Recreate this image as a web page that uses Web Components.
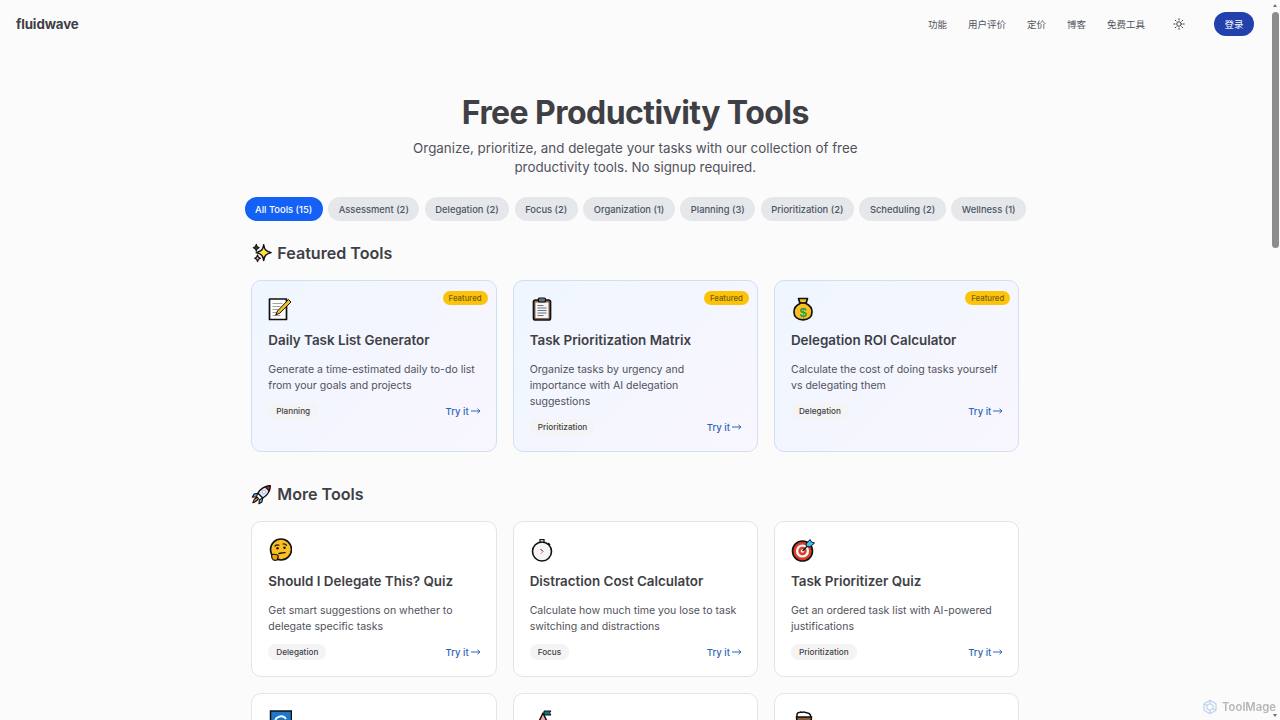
<!DOCTYPE html>
<html lang="en">
<head>
<meta charset="utf-8">
<title>Free Productivity Tools</title>
<style>
  html, body { margin: 0; height: 100%; overflow: hidden; background: #fbfbfb; }
  body { font-family: Inter, "Noto Sans CJK SC", sans-serif; color: #3f3f46; }
</style>
</head>
<body>
<site-header></site-header>
<page-main>
  <tools-hero heading="Free Productivity Tools">Organize, prioritize, and delegate your tasks with our collection of free productivity tools. No signup required.</tools-hero>
  <filter-bar>
    <filter-pill active>All Tools (15)</filter-pill>
    <filter-pill>Assessment (2)</filter-pill>
    <filter-pill>Delegation (2)</filter-pill>
    <filter-pill>Focus (2)</filter-pill>
    <filter-pill>Organization (1)</filter-pill>
    <filter-pill>Planning (3)</filter-pill>
    <filter-pill>Prioritization (2)</filter-pill>
    <filter-pill>Scheduling (2)</filter-pill>
    <filter-pill>Wellness (1)</filter-pill>
  </filter-bar>
  <tool-section icon="sparkles" heading="Featured Tools" class="featured">
    <tool-card featured icon="memo" heading="Daily Task List Generator" tag="Planning">Generate a time-estimated daily to-do list from your goals and projects</tool-card>
    <tool-card featured icon="clipboard" heading="Task Prioritization Matrix" tag="Prioritization">Organize tasks by urgency and importance with AI delegation suggestions</tool-card>
    <tool-card featured icon="bag" heading="Delegation ROI Calculator" tag="Delegation">Calculate the cost of doing tasks yourself vs delegating them</tool-card>
  </tool-section>
  <tool-section icon="rocket" heading="More Tools">
    <tool-card icon="thinking" heading="Should I Delegate This? Quiz" tag="Delegation">Get smart suggestions on whether to delegate specific tasks</tool-card>
    <tool-card icon="stopwatch" heading="Distraction Cost Calculator" tag="Focus">Calculate how much time you lose to task switching and distractions</tool-card>
    <tool-card icon="target" heading="Task Prioritizer Quiz" tag="Prioritization">Get an ordered task list with AI-powered justifications</tool-card>
    <tool-card icon="cycle"></tool-card>
    <tool-card icon="peak"></tool-card>
    <tool-card icon="coffee"></tool-card>
  </tool-section>
</page-main>
<fake-scrollbar></fake-scrollbar>
<tool-watermark></tool-watermark>

<script>
const ICONS = {
  sparkles: `<path d="M14.500 2c.8 5.500 2.400 7.500 8.500 9-6.100 1.500-7.700 3.500-8.500 9-.8-5.500-2.400-7.500-8.500-9 6.100-1.500 7.700-3.500 8.500-9z" fill="#fde047" stroke="#111" stroke-width="1.700" stroke-linejoin="round"/>
    <path d="M6 1.500c.4 2.600 1 3.400 3.400 3.900C7 5.900 6.400 6.700 6 9.300 5.600 6.700 5 5.900 2.600 5.400 5 4.900 5.600 4.100 6 1.500z" fill="#3f3f46" stroke="#111" stroke-width="1.300" stroke-linejoin="round"/>
    <path d="M7.500 13.500c.4 2.600 1 3.400 3.400 3.900-2.400.5-3 1.300-3.400 3.900-.4-2.600-1-3.400-3.400-3.900 2.400-.5 3-1.300 3.400-3.900z" fill="#e9a6c0" stroke="#111" stroke-width="1.300" stroke-linejoin="round"/>`,
  rocket: `<path d="M22 2c-6.500.3-11 3-14 8.500l5.500 5.500c5.500-3 8.200-7.500 8.500-14z" fill="#dbeafe" stroke="#111" stroke-width="1.600" stroke-linejoin="round"/>
    <path d="M22 2c-2.200.1-4.100.5-5.900 1.300l4.600 4.600c.8-1.800 1.200-3.700 1.300-5.900z" fill="#c81e1e" stroke="#111" stroke-width="1.200" stroke-linejoin="round"/>
    <circle cx="14.700" cy="9.300" r="2" fill="#fff" stroke="#9ca3af" stroke-width=".8"/>
    <path d="M8 10.500 3.500 11.500 1.500 15l4.500-.5zM13.500 16l-1 4.500-3.500 2 .5-4.500z" fill="#60a5fa" stroke="#111" stroke-width="1.200" stroke-linejoin="round"/>
    <path d="M7 15c-2.200.7-4 2.800-5 6.500 3.700-1 5.800-2.800 6.500-5z" fill="#f97316" stroke="#111" stroke-width="1.200" stroke-linejoin="round"/>`,
  memo: `<path d="M1.500 2h17v20.500h-17z" fill="#fff" stroke="#111" stroke-width="1.700" stroke-linejoin="round"/>
    <path d="M4.500 6.500h10M4.500 9.500h8M4.500 12.500h6M4.500 15.500h5M4.500 18.500h8" stroke="#a8a29e" stroke-width="1"/>
    <path d="M20.500 2.500 9.500 14l-1.800 4 4-1.800L23 5z" fill="#fbbf24" stroke="#111" stroke-width="1" stroke-linejoin="round"/>`,
  clipboard: `<rect x="3.500" y="3" width="17" height="20" rx="2" fill="#8b6b52" stroke="#111" stroke-width="1.700"/>
    <rect x="5.500" y="5.500" width="13" height="15.500" fill="#f3f4f6"/>
    <rect x="8.500" y="1" width="7" height="4" rx="1" fill="#6b7280" stroke="#111" stroke-width="1.200"/>
    <path d="M7.500 8.500h6M7.500 11h9M7.500 13.500h9M7.500 16h9M7.500 18.500h6" stroke="#6b7280" stroke-width="1"/>`,
  bag: `<path d="M7.500 1.500h9L15 6.500c4 1.800 6 5 6 8.500 0 4.800-3.500 7.800-9 7.800S3 19.800 3 15c0-3.500 2-6.700 6-8.500z" fill="#fbbf24" stroke="#111" stroke-width="1.700" stroke-linejoin="round"/>
    <path d="M8.500 6h7" stroke="#111" stroke-width="1.700"/>
    <text x="12" y="19.500" text-anchor="middle" font-family="Liberation Sans, sans-serif" font-size="13" font-weight="700" fill="#16a34a">$</text>`,
  thinking: `<circle cx="13" cy="11.500" r="10.500" fill="#fbbf24" stroke="#111" stroke-width="1.600"/>
    <path d="M7 8c1.200-1.200 2.800-1.400 4-.8M15 6c1.500-.2 2.800.3 3.500 1.300" fill="none" stroke="#111" stroke-width="1.200" stroke-linecap="round"/>
    <circle cx="9.500" cy="10.200" r="1.200" fill="#111"/><circle cx="16.500" cy="9.700" r="1.200" fill="#111"/>
    <path d="M11 15.500c2-.4 4-1 6-.8" fill="none" stroke="#111" stroke-width="1.300" stroke-linecap="round"/>
    <path d="M3.500 17c1.500-1 3.800-.8 5.300-.3 1 .4 1.800 1.500 1.200 2.800l-1 2.500c-1.800.7-4 0-5-1.800z" fill="#f59e0b" stroke="#111" stroke-width="1.200" stroke-linejoin="round"/>`,
  stopwatch: `<circle cx="12" cy="13.500" r="9.500" fill="#f5f5f5" stroke="#111" stroke-width="1.600"/>
    <path d="M10 1.500h4v2.500h-4z" fill="#d4d4d4" stroke="#111" stroke-width="1.200"/>
    <path d="m18 5 2 2" stroke="#111" stroke-width="1.600"/>
    <path d="m10.500 11 2.500 2.500-2.500 2.500" fill="none" stroke="#a1a1aa" stroke-width="1"/>
    <path d="m10.500 11 2.500 2.500" stroke="#c81e1e" stroke-width="1"/>`,
  target: `<circle cx="11.500" cy="13" r="10" fill="#dc3b26" stroke="#111" stroke-width="1.600"/>
    <circle cx="11.500" cy="13" r="6.600" fill="#f5f5f5"/><circle cx="11.500" cy="13" r="4.200" fill="#dc3b26"/><circle cx="11.500" cy="13" r="1.800" fill="#f5f5f5"/>
    <path d="m11.500 13 8-8" stroke="#111" stroke-width="1.300"/>
    <path d="m15 6 4-4.500 1.500 2.500 3 1-4.500 4-3.500-.5z" fill="#38bdf8" stroke="#111" stroke-width="1" stroke-linejoin="round"/>`,
  cycle: `<rect x="2.500" y="1" width="21" height="22" fill="#1d78c9" stroke="#111" stroke-width="1.500"/>
    <path d="M7 12a6 6 0 0 1 11-3M19 12a6 6 0 0 1-11 3" fill="none" stroke="#fff" stroke-width="1.800"/>`,
  peak: `<path d="M13 3 4 22h18z" fill="#f4a6a6" stroke="#111" stroke-width="1.500" stroke-linejoin="round"/>
    <path d="M14 4V1h7l-1.500 2 1.500 2h-7z" fill="#0e7490" stroke="#111" stroke-width="1"/>`,
  coffee: `<path d="M6 4c1-2 2.500-1 3.500-2 1.200 1 2.500-.2 3.500 0 1 1 2.500 0 3.500 1 1 0 2 .5 3 2v3H6z" fill="#fff" stroke="#111" stroke-width="1.500"/>
    <path d="M5.500 7h15l-1.500 15H7z" fill="#8b5e3c" stroke="#111" stroke-width="1.500"/>`
};

class ToolIcon extends HTMLElement {
  connectedCallback() {
    const size = this.getAttribute('size') || 24;
    this.attachShadow({ mode: 'open' }).innerHTML = `
      <style>:host { display: block; width: ${size}px; height: ${size}px; } svg { display: block; }</style>
      <svg width="${size}" height="${size}" viewBox="0 0 24 24" fill="none">${ICONS[this.getAttribute('name')]}</svg>`;
  }
}

class SiteHeader extends HTMLElement {
  connectedCallback() {
    this.attachShadow({ mode: 'open' }).innerHTML = `
      <style>
        :host { display: block; margin-right: 9px; }
        header { display: flex; align-items: center; height: 48px; padding: 0 17px 0 16px; }
        .logo { font-size: 13.300px; font-weight: 700; color: #3f3f46; letter-spacing: -.1px; margin-right: auto; }
        nav { display: flex; gap: 21px; font-size: 9.500px; color: #52525b; font-family: "Noto Sans CJK SC", sans-serif; }
        .sun { margin: 0 29px 0 28px; display: block; }
        button { width: 40px; height: 24px; border: 0; border-radius: 12px; background: #2241ad; color: #fff; font: 400 9.500px "Noto Sans CJK SC", sans-serif; padding: 0; }
      </style>
      <header>
        <div class="logo">fluidwave</div>
        <nav><span>功能</span><span>用户评价</span><span>定价</span><span>博客</span><span>免费工具</span></nav>
        <svg class="sun" width="12" height="12" viewBox="0 0 24 24" fill="none" stroke="#3f3f46" stroke-width="2" stroke-linecap="round">
          <circle cx="12" cy="12" r="4.500"/><path d="M12 1.500v2.500M12 20v2.500M1.500 12H4M20 12h2.500M4.600 4.600l1.700 1.700M17.700 17.700l1.700 1.700M4.600 19.400l1.700-1.700M17.700 6.300l1.700-1.700"/>
        </svg>
        <button>登录</button>
      </header>`;
  }
}

class PageMain extends HTMLElement {
  connectedCallback() {
    this.attachShadow({ mode: 'open' }).innerHTML = `
      <style>:host { display: block; margin-right: 9.400px; } main { width: 768px; margin: 0 auto; }</style>
      <main><slot></slot></main>`;
  }
}

class ToolsHero extends HTMLElement {
  connectedCallback() {
    this.attachShadow({ mode: 'open' }).innerHTML = `
      <style>
        :host { display: block; text-align: center; padding-top: 43px; }
        h1 { margin: 0 0 4px; font-size: 32px; line-height: 44px; font-weight: 700; letter-spacing: -.56px; color: #3f3f46; }
        p { margin: 0 auto; width: 480px; font-size: 13.360px; line-height: 19.200px; color: #52525b; }
      </style>
      <h1>${this.getAttribute('heading')}</h1>
      <p><slot></slot></p>`;
  }
}

class FilterBar extends HTMLElement {
  connectedCallback() {
    this.attachShadow({ mode: 'open' }).innerHTML = `
      <style>:host { display: flex; justify-content: center; gap: 5.300px; margin: 20px -10px 0; }</style>
      <slot></slot>`;
  }
}

class FilterPill extends HTMLElement {
  connectedCallback() {
    const on = this.hasAttribute('active');
    this.attachShadow({ mode: 'open' }).innerHTML = `
      <style>
        :host { display: block; height: 24px; line-height: 25px; padding: 0 10.600px; border-radius: 12px; white-space: nowrap;
          font-size: 9.400px; font-weight: 500; background: ${on ? '#1560f5' : '#e5e7eb'}; color: ${on ? '#fff' : '#4b5563'}; }
      </style>
      <slot></slot>`;
  }
}

class ToolSection extends HTMLElement {
  connectedCallback() {
    this.attachShadow({ mode: 'open' }).innerHTML = `
      <style>
        :host { display: block; margin-top: 20px; }
        :host(:not(.featured)) { margin-top: 30px; }
        h2 { display: flex; align-items: center; gap: 5px; margin: 0 0 15px; height: 24px; font-size: 16.100px; font-weight: 600; color: #3f3f46; }
        .grid { display: grid; grid-template-columns: repeat(3, 1fr); gap: 16px; }
      </style>
      <h2><tool-icon name="${this.getAttribute('icon')}" size="21"></tool-icon>${this.getAttribute('heading')}</h2>
      <div class="grid"><slot></slot></div>`;
  }
}

class ToolCard extends HTMLElement {
  connectedCallback() {
    const feat = this.hasAttribute('featured');
    const heading = this.getAttribute('heading');
    const tag = this.getAttribute('tag');
    this.attachShadow({ mode: 'open' }).innerHTML = `
      <style>
        :host { display: block; position: relative; box-sizing: border-box; padding: 16px; border-radius: 10px;
          border: 1px solid ${feat ? '#cfe0f5' : '#e4e4e7'};
          background: ${feat ? 'linear-gradient(135deg, #eff6ff, #f9f6fe)' : '#fff'}; }
        .badge { position: absolute; top: 10px; right: 8px; height: 14px; line-height: 14px; padding: 0 6px; border-radius: 7px;
          background: #fbc40a; color: #7c5a10; font-size: 7.800px; font-weight: 500; }
        h3 { margin: 9px 0 0; font-size: 13.400px; line-height: 20px; font-weight: 600; color: #3f3f46; }
        p { margin: 12px 0 0; font-size: 10.550px; line-height: 16px; color: #52525b; }
        .foot { display: flex; justify-content: space-between; align-items: center; margin-top: 9px; height: 16px; }
        .tag { height: 16px; line-height: 16px; padding: 0 8px; border-radius: 8px; background: #f4f4f5; color: #3f3f46; font-size: 8.200px; font-weight: 500; }
        .try { display: flex; align-items: center; gap: 2px; font-size: 9.500px; font-weight: 500; color: #2f66b8; margin-right: -1px; }
      </style>
      ${feat ? '<span class="badge">Featured</span>' : ''}
      <tool-icon name="${this.getAttribute('icon')}" size="24"></tool-icon>
      ${heading ? `<h3>${heading}</h3><p><slot></slot></p>
      <div class="foot"><span class="tag">${tag}</span><span class="try">Try it
        <svg width="10" height="8" viewBox="0 0 10 8" fill="none" stroke="#2f66b8" stroke-width="1"><path d="M0 4h9M6.500 1.800 9 4 6.500 6.200"/></svg></span></div>` : ''}`;
  }
}

class FakeScrollbar extends HTMLElement {
  connectedCallback() {
    this.attachShadow({ mode: 'open' }).innerHTML = `
      <style>
        :host { position: fixed; top: 0; right: 0; bottom: 0; width: 9px; background: #fbfbfb; }
        .thumb { position: absolute; top: 12px; left: 1px; width: 7px; height: 236px; border-radius: 3.500px; background: #8c8c8c; }
        .up, .down { position: absolute; left: 2px; border: 2.500px solid transparent; }
        .up { top: 2px; border-bottom: 3px solid #6f6f6f; }
        .down { bottom: 1px; border-top: 3px solid #6f6f6f; }
      </style>
      <div class="up"></div><div class="thumb"></div><div class="down"></div>`;
  }
}

class ToolWatermark extends HTMLElement {
  connectedCallback() {
    this.attachShadow({ mode: 'open' }).innerHTML = `
      <style>
        :host { position: fixed; right: 4px; bottom: 5px; display: flex; align-items: center; gap: 4px;
          font-size: 11.300px; font-weight: 600; color: #b4b6ba; }
      </style>
      <svg width="16" height="16" viewBox="0 0 24 24" fill="none" stroke="#bcd0f0" stroke-width="1.800" stroke-linejoin="round">
        <path d="M12 2 21 7v10l-9 5-9-5V7z"/><path d="M12 7l4.500 2.500v5L12 17l-4.500-2.500v-5zM3 7l4.500 2.500M21 17l-4.500-2.500M12 2v5M12 17v5"/>
      </svg>
      <span>ToolMage</span>`;
  }
}

customElements.define('tool-icon', ToolIcon);
customElements.define('site-header', SiteHeader);
customElements.define('page-main', PageMain);
customElements.define('tools-hero', ToolsHero);
customElements.define('filter-bar', FilterBar);
customElements.define('filter-pill', FilterPill);
customElements.define('tool-section', ToolSection);
customElements.define('tool-card', ToolCard);
customElements.define('fake-scrollbar', FakeScrollbar);
customElements.define('tool-watermark', ToolWatermark);
</script>
</body>
</html>
